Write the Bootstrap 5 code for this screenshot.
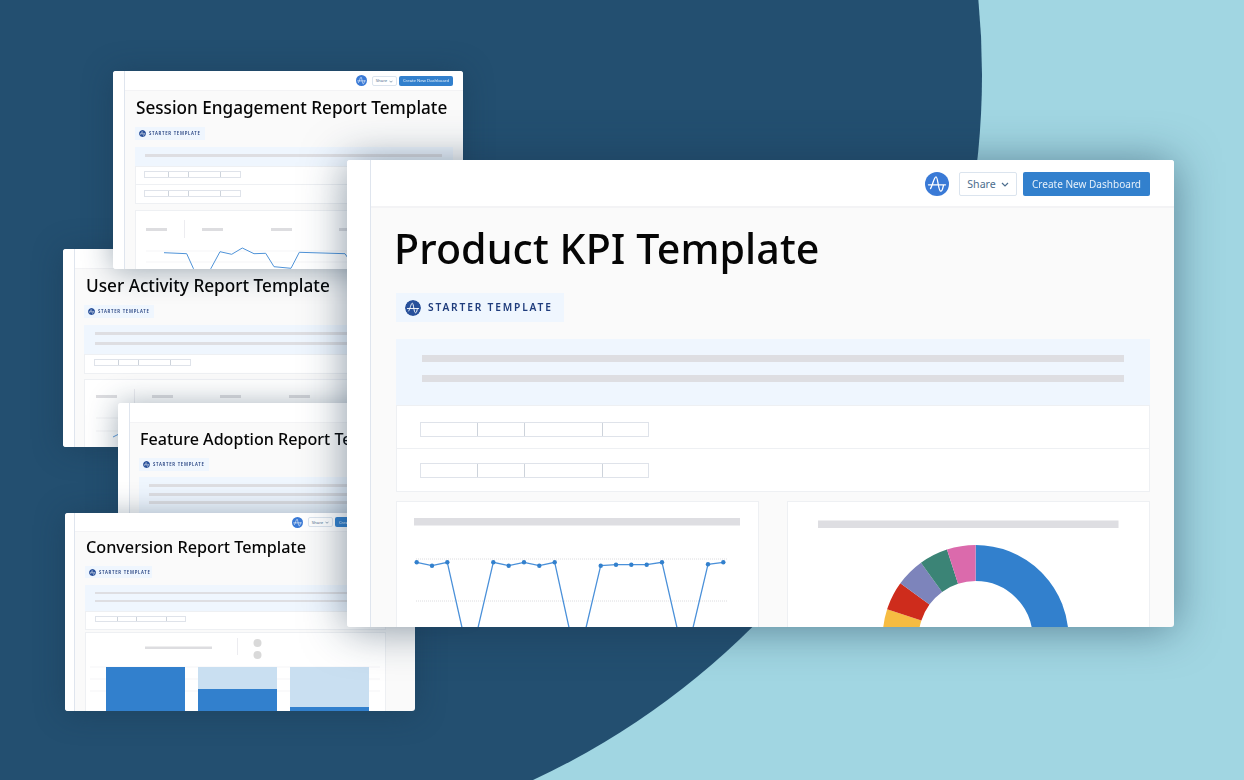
<!doctype html>
<html lang="en">
<head>
<meta charset="utf-8">
<title>Report templates</title>
<link href="https://cdn.jsdelivr.net/npm/bootstrap@5.3.0/dist/css/bootstrap.min.css" rel="stylesheet">
<style>
html,body{margin:0;background:#a1d6e2;font-family:"Noto Sans","Liberation Sans",sans-serif}
.stage{width:1244px;height:780px;overflow:hidden;background:#a1d6e2}
.blob{left:-574px;top:-703px;width:1556px;height:1556px;border-radius:50%;background:#234f70}
.win{background:#fafafa;overflow:hidden;border-radius:3px;box-shadow:0 2px 30px rgba(24,52,76,.42)}
.win-main{left:347px;top:160px;width:827px;height:467px;z-index:6;box-shadow:0 2px 44px rgba(24,52,76,.52)}
.win-sm{width:350px;height:198px}
.w1{left:113px;top:71px;z-index:3}
.w2{left:63px;top:249px;z-index:2}
.w3{left:118px;top:403px;z-index:4}
.w4{left:65px;top:513px;z-index:5}
.rail{flex:0 0 auto;background:#fff;border-right:1px solid #dfe5ee}
.win-main .rail{width:24px}
.win-sm .rail{width:12px}
.w4 .rail{width:10px}
.pane{min-width:0}
.head{background:#fff;border-bottom:2px solid #f3f3f5}
.win-main .head{height:48px;padding:2px 24px 0 0;gap:6px}
.win-sm .head{height:20px;padding-right:10px;gap:2px;border-bottom-width:1px}
.w4 .head{height:19px;padding-right:26px}
.logo{display:block;flex:0 0 auto}
.win-main .head .logo{width:24px;height:24px;margin-right:4px}
.win-sm .head .logo{width:11px;height:11px;margin-right:3px}
.act{border-radius:2px;padding:0;font-family:"Noto Sans",sans-serif;line-height:1}
.win-main .act{height:24px;font-size:10.6px}
.win-main .act-new{font-size:10.05px}
.win-sm .act{height:10px;font-size:4.25px}
.act-share{background:#fff;border:1px solid #dbe4ee;color:#4c6d8d}
.act-new,.act-new:hover{background:#3280cd;border:0;color:#e6f0fa}
.win-main .act-share{width:58px}
.win-main .act-new{width:127px}
.win-sm .act-share{width:25px}
.win-sm .act-new{width:54px}
.caret{display:inline-block;vertical-align:middle}
.win-main .caret{width:8px;height:5px;margin-left:5px}
.win-sm .caret{width:4px;height:3px;margin-left:2px}
.body-main{padding:0 24px 0 25px}
.body-sm{padding:0 10px 0 10px}
.w2 .body-sm,.w3 .body-sm{padding-left:9px}
.w4 .body-sm{padding-right:29px}
.ttl{margin:0;color:#060606;font-weight:500;white-space:nowrap;overflow:visible}
.win-main .ttl{font-size:41.15px;height:85px;line-height:80px;letter-spacing:.1px;margin-left:-2px}
.win-sm .ttl{height:36px;line-height:34px;margin-left:1px}
.w1 .ttl{font-size:17.15px}
.w2 .ttl{font-size:17.2px;margin-left:2px}
.w3 .ttl{font-size:16.1px;height:35px;line-height:33px}
.w4 .ttl{font-size:16.2px;height:34px;line-height:31px}
.tagbox{background:#eff6fe;color:#1f3c7c;font-weight:600;white-space:nowrap;display:flex;align-items:center}
.win-main .tagbox{width:168px;height:29px;padding-left:9px;gap:7px;font-size:10.2px;letter-spacing:1.85px}
.win-sm .tagbox{width:70px;height:13px;padding-left:4px;gap:3px;font-size:4.3px;letter-spacing:.72px}
.w4 .tagbox{width:67px;height:12px}
.tagbox .logo{border-radius:50%}
.win-main .tagbox .logo{width:16px;height:16px}
.win-sm .tagbox .logo{width:7px;height:7px}
.band{background:#eff6fe}
.win-main .band{margin-top:17px;height:66px;padding:16px 26px 0 26px}
.win-sm .band{margin-top:7px;padding:7px 11px 9px 10px}
.w2 .band{padding-left:11px}
.w3 .band{margin-top:6px}
.lineph{background:#dedee2}
.win-main .lineph{height:7px;margin-bottom:13px}
.win-sm .lineph{height:3px;margin-bottom:7px}
.win-sm .lineph:last-child,.win-main .lineph:last-child{margin-bottom:0}
.w3 .lineph{margin-bottom:5.5px}
.w4 .lineph{height:2px;margin-bottom:6px}
.tbl{background:#fff;border:1px solid #eef0f3}
.rowline{border-bottom:1px solid #eef0f3}
.rowline:last-child{border-bottom:0}
.win-main .rowline{height:43px;padding:16px 0 0 23px}
.win-main .rowline:last-child{height:42px;padding-top:14px}
.win-sm .rowline{height:18px;padding:4px 0 0 8px}
.w1 .rowline:last-child{padding-top:5px}
.w2 .rowline{padding-left:9px}
.w4 .rowline{height:17px;padding-left:9px}
.cells{display:flex;border:1px solid #dfe3ea;background:#fff}
.win-main .cells{width:229px;height:15px}
.win-sm .cells{width:97px;height:7px}
.w4 .cells{width:91px;height:6px}
.cells span{display:block;border-right:1px solid #cdd3db;height:100%}
.cells span:last-child{border-right:0}
.c1{width:25%}.c2{width:21%}.c3{width:34%}.c4{flex:1}
.panel{background:#fff;border:1px solid #eef0f3;overflow:hidden}
.panels-main{margin-top:9px;gap:28px}
.panels-main .panel{flex:1 1 0;height:140px}
.panel-sm{margin-top:5px;height:120px}
.w1 .panel-sm{margin-top:6px}
.w4 .panel-sm{margin-top:2px}
.panel svg{display:block}
.soft{filter:blur(.4px)}
.soft-main{filter:blur(.25px)}
</style>
</head>
<body>
<svg width="0" height="0" class="position-absolute">
  <defs>
    <symbol id="amp" viewBox="0 0 24 24">
      <circle cx="12" cy="12" r="12" fill="#3a7ad6"/>
      <path d="M3.5 12.8H20.5M5.5 16.5C7.5 14 9 4.8 11 4.8C13 4.8 13.2 19.2 15.8 19.2C17.6 19.2 18 15 18.6 12.8" fill="none" stroke="#fff" stroke-width="1.3" stroke-linecap="round"/>
    </symbol>
    <symbol id="ampdark" viewBox="0 0 24 24">
      <circle cx="12" cy="12" r="12" fill="#28509a"/>
      <path d="M3.5 12.8H20.5M5.5 16.5C7.5 14 9 4.8 11 4.8C13 4.8 13.2 19.2 15.8 19.2C17.6 19.2 18 15 18.6 12.8" fill="none" stroke="#fff" stroke-width="1.4" stroke-linecap="round"/>
    </symbol>
    <symbol id="chev" viewBox="0 0 8 5">
      <path d="M1 1L4 4L7 1" fill="none" stroke="currentColor" stroke-width="1.2"/>
    </symbol>
  </defs>
</svg>

<div class="stage position-relative">
  <div class="blob position-absolute"></div>

  <!-- User Activity -->
  <section class="win win-sm w2 position-absolute d-flex soft">
    <div class="rail"></div>
    <div class="pane flex-grow-1">
      <div class="head"></div>
      <div class="body-sm">
        <h2 class="ttl">User Activity Report Template</h2>
        <div class="tagbox"><svg class="logo"><use href="#ampdark"/></svg>STARTER TEMPLATE</div>
        <div class="band"><div class="lineph"></div><div class="lineph"></div></div>
        <div class="tbl"><div class="rowline"><div class="cells"><span class="c1"></span><span class="c2"></span><span class="c3"></span><span class="c4"></span></div></div></div>
        <div class="panel panel-sm">
          <svg width="318" height="90" viewBox="85 380 318 90">
            <g fill="#dddde0"><rect x="96" y="395" width="21" height="3"/><rect x="152" y="395" width="21" height="3"/><rect x="220" y="395" width="21" height="3"/><rect x="289" y="395" width="21" height="3"/></g>
            <rect x="134" y="389" width="1" height="18" fill="#ececf0"/>
            <path d="M96 418H345M96 431H345" stroke="#f3f3f5"/>
            <path d="M113 437L119 434" stroke="#5b9bdc" fill="none"/>
          </svg>
        </div>
      </div>
    </div>
  </section>

  <!-- Session Engagement -->
  <section class="win win-sm w1 position-absolute d-flex soft">
    <div class="rail"></div>
    <div class="pane flex-grow-1">
      <div class="head d-flex justify-content-end align-items-center">
        <svg class="logo"><use href="#amp"/></svg>
        <button class="btn act act-share" type="button">Share<svg class="caret"><use href="#chev"/></svg></button>
        <button class="btn act act-new" type="button">Create New Dashboard</button>
      </div>
      <div class="body-sm">
        <h2 class="ttl">Session Engagement Report Template</h2>
        <div class="tagbox"><svg class="logo"><use href="#ampdark"/></svg>STARTER TEMPLATE</div>
        <div class="band"><div class="lineph"></div></div>
        <div class="tbl">
          <div class="rowline"><div class="cells"><span class="c1"></span><span class="c2"></span><span class="c3"></span><span class="c4"></span></div></div>
          <div class="rowline"><div class="cells"><span class="c1"></span><span class="c2"></span><span class="c3"></span><span class="c4"></span></div></div>
        </div>
        <div class="panel panel-sm">
          <svg width="316" height="60" viewBox="136 211 316 60">
            <g fill="#dddde0"><rect x="146" y="228" width="21" height="3"/><rect x="202" y="228" width="21" height="3"/><rect x="271" y="228" width="21" height="3"/><rect x="339" y="228" width="21" height="3"/></g>
            <rect x="184" y="220" width="1" height="18" fill="#ececf0"/>
            <path d="M146 251H445M146 262H445" stroke="#f5f5f7"/>
            <path d="M164 252.7L186.7 253.7L193.3 268.3L196 273L208 273L211 268.3L220 251.7L231.7 254.3L242.3 248L254 253.7L265.7 253.3L274 266.7L291 268.3L299.3 252.3L345 253.7L352 264" fill="none" stroke="#4f93d8" stroke-width="1"/>
          </svg>
        </div>
      </div>
    </div>
  </section>

  <!-- Feature Adoption -->
  <section class="win win-sm w3 position-absolute d-flex soft">
    <div class="rail"></div>
    <div class="pane flex-grow-1">
      <div class="head"></div>
      <div class="body-sm">
        <h2 class="ttl">Feature Adoption Report Template</h2>
        <div class="tagbox"><svg class="logo"><use href="#ampdark"/></svg>STARTER TEMPLATE</div>
        <div class="band"><div class="lineph"></div><div class="lineph"></div><div class="lineph"></div></div>
      </div>
    </div>
  </section>

  <!-- Conversion -->
  <section class="win win-sm w4 position-absolute d-flex soft">
    <div class="rail"></div>
    <div class="pane flex-grow-1">
      <div class="head d-flex justify-content-end align-items-center">
        <svg class="logo"><use href="#amp"/></svg>
        <button class="btn act act-share" type="button">Share<svg class="caret"><use href="#chev"/></svg></button>
        <button class="btn act act-new" type="button">Create New Dashboard</button>
      </div>
      <div class="body-sm">
        <h2 class="ttl">Conversion Report Template</h2>
        <div class="tagbox"><svg class="logo"><use href="#ampdark"/></svg>STARTER TEMPLATE</div>
        <div class="band"><div class="lineph"></div><div class="lineph"></div></div>
        <div class="tbl"><div class="rowline"><div class="cells"><span class="c1"></span><span class="c2"></span><span class="c3"></span><span class="c4"></span></div></div></div>
        <div class="panel panel-sm">
          <svg width="299" height="80" viewBox="86 633 299 80">
            <rect x="145" y="646.5" width="67" height="2.5" fill="#dddde0"/>
            <rect x="237" y="638" width="1" height="17" fill="#ececf0"/>
            <circle cx="257.5" cy="643" r="4" fill="#d9d9d9"/>
            <circle cx="257.5" cy="655" r="4" fill="#d9d9d9"/>
            <path d="M90 667H380M90 679H380M90 691H380" stroke="#f5f5f7"/>
            <rect x="106" y="667" width="79" height="46" fill="#3280cd"/>
            <rect x="198" y="667" width="79" height="46" fill="#c9dff1"/>
            <rect x="198" y="689" width="79" height="24" fill="#3280cd"/>
            <rect x="290" y="667" width="79" height="46" fill="#c9dff1"/>
            <rect x="290" y="707" width="79" height="6" fill="#3280cd"/>
          </svg>
        </div>
      </div>
    </div>
  </section>

  <!-- Product KPI -->
  <section class="win win-main position-absolute d-flex soft-main">
    <div class="rail"></div>
    <div class="pane flex-grow-1">
      <div class="head d-flex justify-content-end align-items-center">
        <svg class="logo"><use href="#amp"/></svg>
        <button class="btn act act-share" type="button">Share<svg class="caret"><use href="#chev"/></svg></button>
        <button class="btn act act-new" type="button">Create New Dashboard</button>
      </div>
      <div class="body-main">
        <h1 class="ttl">Product KPI Template</h1>
        <div class="tagbox"><svg class="logo"><use href="#ampdark"/></svg>STARTER TEMPLATE</div>
        <div class="band"><div class="lineph"></div><div class="lineph"></div></div>
        <div class="tbl">
          <div class="rowline"><div class="cells"><span class="c1"></span><span class="c2"></span><span class="c3"></span><span class="c4"></span></div></div>
          <div class="rowline"><div class="cells"><span class="c1"></span><span class="c2"></span><span class="c3"></span><span class="c4"></span></div></div>
        </div>
        <div class="panels-main d-flex">
          <div class="panel">
            <svg width="361" height="140" viewBox="397 502 361 140">
              <rect x="414" y="518" width="326" height="7.5" fill="#dedee2"/>
              <path d="M416 559H727M416 601H727" stroke="#dcdcdf" stroke-dasharray="1 1"/>
              <path d="M416.7 562.3L432 565.7L447.3 562.3L463 632L477 632L493.3 562.3L508.7 565.7L524 562.3L539.3 565.7L554.7 562.3L570 632L585 632L600.7 565.7L616 564.7L631.3 564.7L646.7 564.7L662 562.3L678 632L692 632L708 564.3L723.3 562.3" fill="none" stroke="#4a90d9" stroke-width="1.25"/>
              <g fill="#3280cd"><circle cx="416.7" cy="562.3" r="2.2"/><circle cx="432" cy="565.7" r="2.2"/><circle cx="447.3" cy="562.3" r="2.2"/><circle cx="493.3" cy="562.3" r="2.2"/><circle cx="508.7" cy="565.7" r="2.2"/><circle cx="524" cy="562.3" r="2.2"/><circle cx="539.3" cy="565.7" r="2.2"/><circle cx="554.7" cy="562.3" r="2.2"/><circle cx="600.7" cy="565.7" r="2.2"/><circle cx="616" cy="564.7" r="2.2"/><circle cx="631.3" cy="564.7" r="2.2"/><circle cx="646.7" cy="564.7" r="2.2"/><circle cx="662" cy="562.3" r="2.2"/><circle cx="708" cy="564.3" r="2.2"/><circle cx="723.3" cy="562.3" r="2.2"/></g>
            </svg>
          </div>
          <div class="panel">
            <svg width="361" height="140" viewBox="788 502 361 140">
              <rect x="818" y="520.5" width="300.5" height="7.5" fill="#dedee2"/>
              <g fill="none" stroke-width="36" transform="rotate(-90 975.6 638)">
                <circle cx="975.6" cy="638" r="75" pathLength="360" stroke="#3280cd" stroke-dasharray="180 180"/>
                <circle cx="975.6" cy="638" r="75" pathLength="360" stroke="#f6bc42" stroke-dasharray="90 270" stroke-dashoffset="-198"/>
                <circle cx="975.6" cy="638" r="75" pathLength="360" stroke="#ce2c1c" stroke-dasharray="18 342" stroke-dashoffset="-288"/>
                <circle cx="975.6" cy="638" r="75" pathLength="360" stroke="#7d84bb" stroke-dasharray="18 342" stroke-dashoffset="-306"/>
                <circle cx="975.6" cy="638" r="75" pathLength="360" stroke="#3b8476" stroke-dasharray="18 342" stroke-dashoffset="-324"/>
                <circle cx="975.6" cy="638" r="75" pathLength="360" stroke="#db6aac" stroke-dasharray="18 342" stroke-dashoffset="-342"/>
              </g>
            </svg>
          </div>
        </div>
      </div>
    </div>
  </section>
</div>
<script src="https://cdn.jsdelivr.net/npm/bootstrap@5.3.0/dist/js/bootstrap.bundle.min.js"></script>
</body>
</html>
